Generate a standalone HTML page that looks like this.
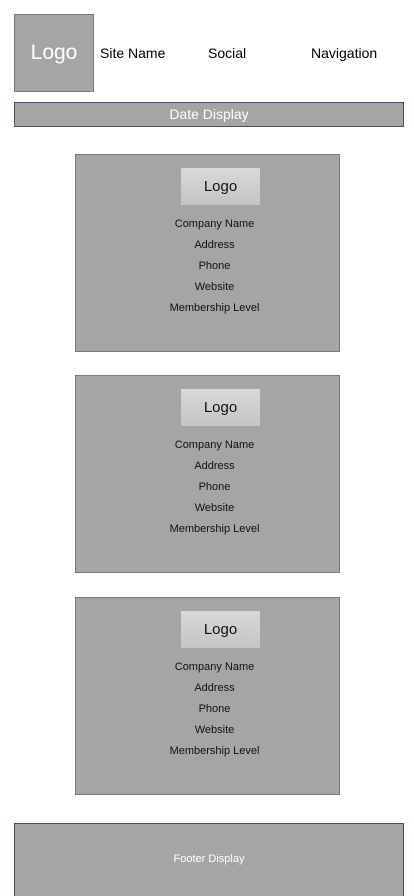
<!DOCTYPE html>
<html style="width:414px;height:896px;overflow:hidden"><head><style>
body{margin:0;width:414px;height:896px;background:#fff;font-family:"Liberation Sans",sans-serif;position:relative;overflow:hidden}
.a{position:absolute}
.g{background:#a5a5a5}
.c{position:absolute;left:75px;width:263px;height:196px;background:#a5a5a5;border:1px solid #7a7a7a}
.c .l{position:absolute;left:105px;top:13px;width:79px;height:37px;background:linear-gradient(#d9d9d9,#c4c4c4);font-size:15px;line-height:37px;text-align:center;color:#111}
.c .t{position:absolute;left:14px;width:249px;text-align:center;font-size:11px;color:#111}
</style></head><body>
<div class="a g" style="left:14px;top:14px;width:78px;height:76px;border:1px solid #7a7a7a;color:#fff;font-size:21px;line-height:76px;text-align:center">Logo</div>
<div class="a" style="left:100px;top:45px;font-size:14px">Site Name</div>
<div class="a" style="left:208px;top:45px;font-size:14px">Social</div>
<div class="a" style="left:311px;top:45px;font-size:14px">Navigation</div>
<div class="a g" style="left:14px;top:102px;width:388px;height:23px;border:1px solid #3a5080;color:#fff;font-size:14px;line-height:23px;text-align:center">Date Display</div>
<div class="c" style="top:154px"><div class="l">Logo</div><div class="t" style="top:63px">Company Name</div><div class="t" style="top:84px">Address</div><div class="t" style="top:105px">Phone</div><div class="t" style="top:126px">Website</div><div class="t" style="top:147px">Membership Level</div></div>
<div class="c" style="top:375px"><div class="l">Logo</div><div class="t" style="top:63px">Company Name</div><div class="t" style="top:84px">Address</div><div class="t" style="top:105px">Phone</div><div class="t" style="top:126px">Website</div><div class="t" style="top:147px">Membership Level</div></div>
<div class="c" style="top:597px"><div class="l">Logo</div><div class="t" style="top:63px">Company Name</div><div class="t" style="top:84px">Address</div><div class="t" style="top:105px">Phone</div><div class="t" style="top:126px">Website</div><div class="t" style="top:147px">Membership Level</div></div>
<div class="a g" style="left:14px;top:823px;width:388px;height:80px;border:1px solid #3a5080;color:#fff;font-size:11px;line-height:70px;text-align:center">Footer Display</div>
</body></html>
